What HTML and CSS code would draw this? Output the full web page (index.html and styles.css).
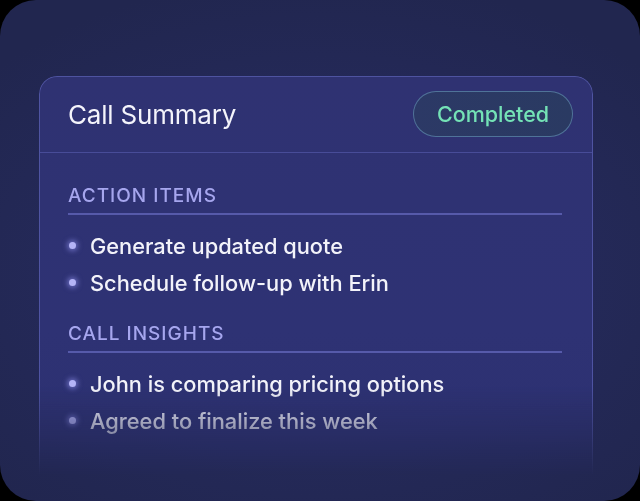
FILE: index.html
```html
<!DOCTYPE html>
<html>
<head>
<meta charset="utf-8">
<link rel="stylesheet" href="styles.css">
</head>
<body>
<div class="frame">
  <div class="card">
    <div class="card-head">
      <h1 class="title">Call Summary</h1>
      <span class="badge">Completed</span>
    </div>
    <div class="card-body">
      <section class="section">
        <h2 class="section-title">Action Items</h2>
        <ul class="list">
          <li class="item"><span class="dot"></span>Generate updated quote</li>
          <li class="item"><span class="dot"></span>Schedule follow-up with Erin</li>
        </ul>
      </section>
      <section class="section">
        <h2 class="section-title">Call Insights</h2>
        <ul class="list">
          <li class="item"><span class="dot"></span>John is comparing pricing options</li>
          <li class="item"><span class="dot"></span>Agreed to finalize this week</li>
        </ul>
      </section>
    </div>
  </div>
</div>
</body>
</html>
```

FILE: styles.css
```css
* { box-sizing: border-box; }
html, body { margin: 0; padding: 0; background: #000; }
body { font-family: Inter, "Noto Sans", sans-serif; }

.frame {
  width: 640px;
  height: 501px;
  border-radius: 36px;
  background: radial-gradient(ellipse 70% 60% at 50% 55%, #2a2f66 0%, #242958 60%, #21264f 100%);
  padding: 76px 47px 0 39px;
  overflow: hidden;
}

.card {
  height: 425px;
  border-radius: 18px 18px 0 0;
  background: linear-gradient(180deg, #2f3272 0%, #2e3274 60%, #2c3070 100%);
  border: 1px solid rgba(120, 126, 220, 0.45);
  border-bottom: none;
  -webkit-mask-image: linear-gradient(180deg, #000 0%, #000 73%, rgba(0,0,0,0.5) 84%, rgba(0,0,0,0) 94%);
  mask-image: linear-gradient(180deg, #000 0%, #000 73%, rgba(0,0,0,0.5) 84%, rgba(0,0,0,0) 94%);
}

.card-head {
  height: 76px;
  display: flex;
  align-items: center;
  justify-content: space-between;
  padding: 0 19px 0 28px;
  border-bottom: 1px solid rgba(120, 126, 220, 0.35);
}

.title {
  margin: 0;
  font-size: 26px;
  font-weight: 400;
  color: #f4f4fb;
  letter-spacing: -0.2px;
}

.badge {
  width: 160px;
  height: 46px;
  margin-top: -2px;
  border-radius: 23px;
  display: flex;
  align-items: center;
  justify-content: center;
  font-size: 21.5px;
  font-weight: 500;
  color: #74e2b6;
  background: linear-gradient(90deg, #2c3966 0%, #2a3a62 100%);
  border: 1.5px solid rgba(95, 140, 175, 0.7);
}

.card-body {
  padding: 31px 30px 0 28px;
}

.section { margin-bottom: 21px; }

.section-title {
  margin: 0;
  font-size: 19px;
  font-weight: 500;
  text-transform: uppercase;
  letter-spacing: 1px;
  color: #a6a6ee;
  padding-bottom: 6px;
  border-bottom: 2px solid rgba(120, 124, 215, 0.55);
}

.list {
  list-style: none;
  margin: 0;
  padding: 12px 0 0 0;
}

.item {
  display: flex;
  align-items: center;
  height: 37px;
  font-size: 21.8px;
  font-weight: 500;
  color: #f3f3fa;
}

.dot {
  width: 7px;
  height: 7px;
  border-radius: 50%;
  background: #b4b4f6;
  box-shadow: 0 0 5px 2px rgba(150, 150, 245, 0.55);
  margin: 0 14px 0 1px;
  flex: none;
}
```
